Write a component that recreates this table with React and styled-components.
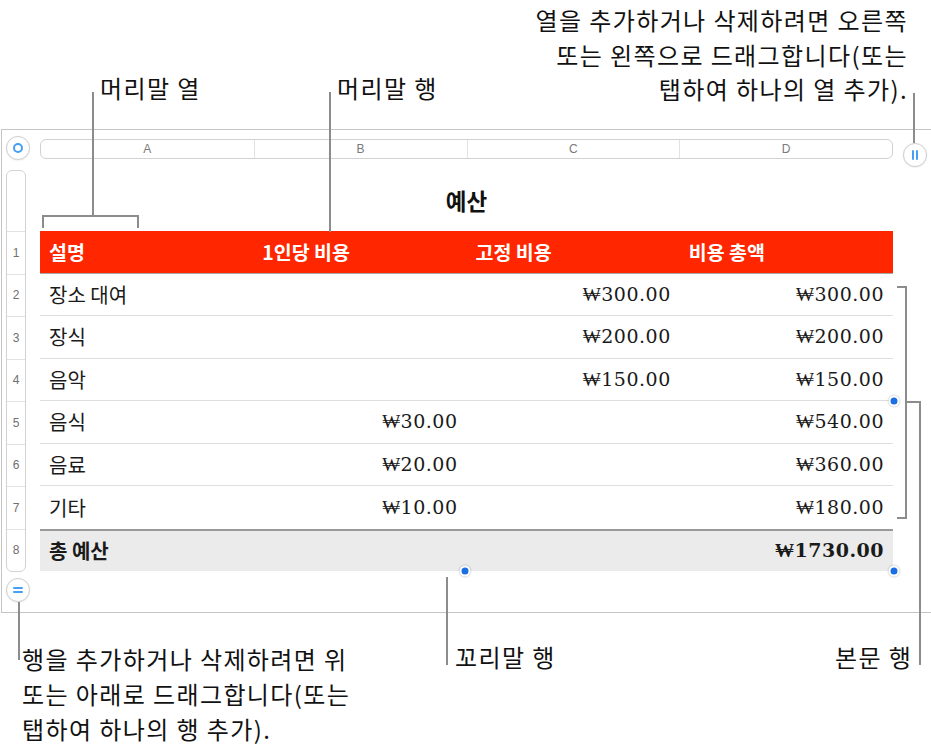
import React from "react";
import styled, { createGlobalStyle } from "styled-components";

const GlobalStyle = createGlobalStyle`
  html, body { margin: 0; padding: 0; background: #fff; }
  body { font-family: "Noto Sans CJK KR", "Noto Sans", sans-serif; color: #111; }
`;

const Page = styled.div`
  position: relative;
  width: 931px;
  height: 747px;
  overflow: hidden;
  background: #fff;
`;

const TopArea = styled.div`
  height: 129px;
  box-sizing: border-box;
  padding: 3px 23px 0 0;
  display: flex;
  justify-content: flex-end;
`;

const BottomArea = styled.div`
  box-sizing: border-box;
  padding: 28px 0 0 22px;
`;

const Note = styled.p`
  margin: 0;
  font-size: 24px;
  line-height: ${(p) => p.$lh || 34.5}px;
  letter-spacing: 1.4px;
  color: #111;
  text-align: ${(p) => p.$align || "left"};
  white-space: nowrap;
`;

const Frame = styled.div`
  margin-left: 1px;
  width: 945px;
  height: 484px;
  box-sizing: border-box;
  border: 1px solid #c4c4c4;
  display: grid;
  grid-template-columns: 38px 853px 1fr;
  grid-template-rows: 30px 1fr;
`;

const CornerCell = styled.div`
  grid-column: 1;
  grid-row: 1;
  padding: 6px 0 0 4px;
`;

const RightRail = styled.div`
  grid-column: 3;
  grid-row: 1 / 3;
  padding: 13px 0 0 10px;
`;

const CircleBtn = styled.div`
  width: 24px;
  height: 24px;
  box-sizing: border-box;
  border-radius: 50%;
  border: 1px solid #cfcfcf;
  background: #fff;
  box-shadow: 0 0.5px 1.5px rgba(0, 0, 0, 0.1);
  display: flex;
  align-items: center;
  justify-content: center;
  gap: 2px;
  flex-direction: ${(p) => (p.$stack ? "column" : "row")};
`;

const Ring = styled.span`
  width: 10px;
  height: 10px;
  box-sizing: border-box;
  border-radius: 50%;
  border: 2px solid #45a0f5;
`;

const Bar = styled.span`
  background: #45a0f5;
  width: ${(p) => (p.$vertical ? 2 : 10)}px;
  height: ${(p) => (p.$vertical ? 10 : 2)}px;
  border-radius: 1px;
`;

const ColumnBar = styled.div`
  grid-column: 2;
  grid-row: 1;
  align-self: start;
  margin-top: 9px;
  height: 20px;
  box-sizing: border-box;
  border: 1px solid #d2d2d2;
  border-radius: 6px;
  display: grid;
  grid-template-columns: repeat(4, 1fr);
  background: #fff;
`;

const ColumnCell = styled.div`
  display: flex;
  align-items: center;
  justify-content: center;
  font-family: "Liberation Sans", Arial, sans-serif;
  font-size: 12px;
  color: #7a7a7a;
  border-left: ${(p) => (p.$first ? "none" : "1px solid #e2e2e2")};
`;

const Gutter = styled.div`
  grid-column: 1;
  grid-row: 2;
  padding: 10px 0 0 4px;
  display: flex;
  flex-direction: column;
  align-items: flex-start;
  gap: 6px;
`;

const RowBar = styled.div`
  width: 20px;
  box-sizing: border-box;
  border: 1px solid #d2d2d2;
  border-radius: 6px;
  display: flex;
  flex-direction: column;
  background: #fff;
`;

const RowSpacer = styled.div`
  height: 60px;
`;

const RowNum = styled.div`
  height: 42.5px;
  box-sizing: border-box;
  border-top: 1px solid #e2e2e2;
  display: flex;
  align-items: center;
  justify-content: center;
  font-family: "Liberation Sans", Arial, sans-serif;
  font-size: 12px;
  color: #6f6f6f;
`;

const Main = styled.div`
  grid-column: 2;
  grid-row: 2;
  display: flex;
  flex-direction: column;
`;

const Title = styled.div`
  height: 71px;
  box-sizing: border-box;
  padding-top: 8px;
  display: flex;
  align-items: center;
  justify-content: center;
  font-size: 22.5px;
  font-weight: 700;
  color: #111;
`;

const Table = styled.div`
  position: relative;
  display: flex;
  flex-direction: column;
`;

const Row = styled.div`
  height: 42.5px;
  box-sizing: border-box;
  display: grid;
  grid-template-columns: repeat(4, 1fr);
  background: ${(p) =>
    p.$kind === "header" ? "#ff2600" : p.$kind === "footer" ? "#ebebeb" : "#fff"};
  border-bottom: ${(p) =>
    p.$kind === "header"
      ? "1px solid #a9a9a9"
      : p.$kind === "body" && !p.$last
      ? "1px solid #dedede"
      : "none"};
  border-top: ${(p) => (p.$kind === "footer" ? "2px solid #999" : "none")};
`;

const Cell = styled.div`
  display: flex;
  align-items: center;
  justify-content: ${(p) => (p.$right ? "flex-end" : "flex-start")};
  padding: 0 9px;
  white-space: nowrap;
  font-size: ${(p) => (p.$header ? 19.5 : 20)}px;
  font-weight: ${(p) => (p.$bold ? 700 : 400)};
  color: ${(p) => (p.$header ? "#fff" : "#1a1a1a")};
`;

const Money = styled.span`
  font-family: "DejaVu Serif", "Liberation Serif", serif;
  font-size: 19px;
  letter-spacing: 0.5px;
  font-variant-numeric: oldstyle-nums;
  font-weight: ${(p) => (p.$bold ? 700 : 400)};
  color: #1a1a1a;
`;

const Dot = styled.span`
  position: absolute;
  left: ${(p) => p.$x}px;
  top: ${(p) => p.$y}px;
  width: 11px;
  height: 11px;
  box-sizing: border-box;
  transform: translate(-50%, -50%);
  border-radius: 50%;
  background: #1c6fe3;
  border: 2px solid #fff;
  box-shadow: 0 0 2px rgba(0, 0, 0, 0.35);
`;

const LeaderLayer = styled.svg`
  position: absolute;
  left: 0;
  top: 0;
  pointer-events: none;
`;

const Callout = styled.span`
  position: absolute;
  left: ${(p) => p.$left}px;
  top: ${(p) => p.$top}px;
  font-size: 24px;
  line-height: 34.5px;
  letter-spacing: 1.4px;
  color: #111;
  white-space: nowrap;
`;

const rows = [
  { label: "장소 대여", b: "", c: "₩300.00", d: "₩300.00" },
  { label: "장식", b: "", c: "₩200.00", d: "₩200.00" },
  { label: "음악", b: "", c: "₩150.00", d: "₩150.00" },
  { label: "음식", b: "₩30.00", c: "", d: "₩540.00" },
  { label: "음료", b: "₩20.00", c: "", d: "₩360.00" },
  { label: "기타", b: "₩10.00", c: "", d: "₩180.00" },
];

export default function App() {
  return (
    <>
      <GlobalStyle />
      <Page>
        <TopArea>
          <Note $align="right">
            열을 추가하거나 삭제하려면 오른쪽
            <br />
            또는 왼쪽으로 드래그합니다(또는
            <br />
            탭하여 하나의 열 추가).
          </Note>
        </TopArea>

        <Frame>
          <CornerCell>
            <CircleBtn>
              <Ring />
            </CircleBtn>
          </CornerCell>

          <ColumnBar>
            {["A", "B", "C", "D"].map((l, i) => (
              <ColumnCell key={l} $first={i === 0}>
                {l}
              </ColumnCell>
            ))}
          </ColumnBar>

          <RightRail>
            <CircleBtn>
              <Bar $vertical />
              <Bar $vertical />
            </CircleBtn>
          </RightRail>

          <Gutter>
            <RowBar>
              <RowSpacer />
              {[1, 2, 3, 4, 5, 6, 7, 8].map((n) => (
                <RowNum key={n}>{n}</RowNum>
              ))}
            </RowBar>
            <CircleBtn $stack>
              <Bar />
              <Bar />
            </CircleBtn>
          </Gutter>

          <Main>
            <Title>예산</Title>
            <Table>
              <Row $kind="header">
                <Cell $header $bold>설명</Cell>
                <Cell $header $bold>1인당 비용</Cell>
                <Cell $header $bold>고정 비용</Cell>
                <Cell $header $bold>비용 총액</Cell>
              </Row>
              {rows.map((r, i) => (
                <Row key={r.label} $kind="body" $last={i === rows.length - 1}>
                  <Cell>{r.label}</Cell>
                  <Cell $right>{r.b && <Money>{r.b}</Money>}</Cell>
                  <Cell $right>{r.c && <Money>{r.c}</Money>}</Cell>
                  <Cell $right>{r.d && <Money>{r.d}</Money>}</Cell>
                </Row>
              ))}
              <Row $kind="footer">
                <Cell $bold>총 예산</Cell>
                <Cell />
                <Cell />
                <Cell $right>
                  <Money $bold>₩1730.00</Money>
                </Cell>
              </Row>
              <Dot $x={854} $y={170} />
              <Dot $x={425} $y={340} />
              <Dot $x={854} $y={340} />
            </Table>
          </Main>
        </Frame>

        <BottomArea>
          <Note $lh={35}>
            행을 추가하거나 삭제하려면 위
            <br />
            또는 아래로 드래그합니다(또는
            <br />
            탭하여 하나의 행 추가).
          </Note>
        </BottomArea>

        <LeaderLayer width="931" height="747" viewBox="0 0 931 747">
          <g stroke="#8c8c8c" strokeWidth="2" fill="none">
            <path d="M93 92 V216" />
            <path d="M43 228 V216 H138 V228" />
            <path d="M330 92 V232" />
            <path d="M914 93 V143" />
            <path d="M19 602 V660" />
            <path d="M447 577 V665" />
            <path d="M897 287 H906 V518 H897" />
            <path d="M906 402 H920 V665" />
          </g>
        </LeaderLayer>

        <Callout $left={100} $top={71}>머리말 열</Callout>
        <Callout $left={337} $top={71}>머리말 행</Callout>
        <Callout $left={455} $top={640}>꼬리말 행</Callout>
        <Callout $left={835} $top={640}>본문 행</Callout>
      </Page>
    </>
  );
}
